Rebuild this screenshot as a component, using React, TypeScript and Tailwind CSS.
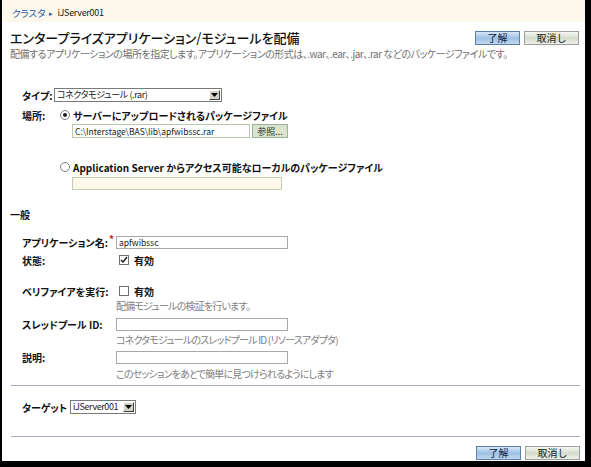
import React from 'react';

const palt = '[font-feature-settings:"palt"]';
const label = 'whitespace-nowrap text-[10px] font-bold leading-[11px] text-[#111] [font-feature-settings:"palt"]';

const OkButton = () => (
  <button className="h-[14px] w-[45px] border border-[#5b7fa6] bg-gradient-to-b from-[#d8e8f8] via-[#9ec0e4] to-[#c0d8f0] text-[10px] leading-none text-[#102040]">
    了解
  </button>
);

const CancelButton = () => (
  <button className="h-[14px] w-[55px] border border-[#9aa09a] bg-gradient-to-b from-[#f8f8f4] via-[#d4dccc] to-[#eeeeea] text-[10px] leading-none text-[#202020]">
    取消し
  </button>
);

const Select = ({ value, width }: { value: string; width: string }) => (
  <div className={`flex h-[14px] ${width} border border-[#7a7a7a] bg-white`}>
    <div className="flex-1 overflow-hidden whitespace-nowrap pl-[2px] text-[9px] leading-[12px] tracking-[-0.4px] text-[#202020] [font-feature-settings:'palt']">
      {value}
    </div>
    <div className="m-[1px] flex w-[11px] items-center justify-center border border-t-white border-l-white border-r-[#404040] border-b-[#404040] bg-[#d4d0c8]">
      <svg width="7" height="4" viewBox="0 0 7 4">
        <path d="M0 0h7L3.5 4z" fill="#000" />
      </svg>
    </div>
  </div>
);

const Radio = ({ checked }: { checked?: boolean }) => (
  <div className="flex h-[10px] w-[10px] items-center justify-center rounded-full border border-[#808080] bg-white">
    {checked && <div className="h-[4px] w-[4px] rounded-full bg-[#202020]" />}
  </div>
);

const Checkbox = ({ checked }: { checked?: boolean }) => (
  <div className="flex h-[10px] w-[10px] items-center justify-center border border-[#707070] bg-white">
    {checked && (
      <svg width="8" height="8" viewBox="0 0 8 8">
        <path d="M1 4l2 2 4-5" stroke="#202020" strokeWidth="1.5" fill="none" />
      </svg>
    )}
  </div>
);

const Help = ({ children }: { children: React.ReactNode }) => (
  <div className="flex h-[12px] items-center whitespace-nowrap pl-[114px] text-[10px] leading-[11px] tracking-[-0.8px] text-[#808080] [font-feature-settings:'palt']">
    {children}
  </div>
);

export default function App() {
  return (
    <div className="flex h-[467px] w-[591px] bg-black pb-[6px] pl-[2px] pr-[6px] [font-family:'Noto_Sans_CJK_JP',sans-serif]">
      <div className="flex flex-1 flex-col bg-white">
        {/* breadcrumb */}
        <div className="flex h-[22px] items-end gap-[4px] bg-[#fcf8ec] pb-[3px] pl-[10px] text-[9.5px] leading-[12px]">
          <span className={`text-[#2a5caa] ${palt}`}>クラスタ</span>
          <span className="text-[7px] text-[#2a5caa]">▸</span>
          <span className="text-[9px] tracking-[-0.3px] text-[#202020]">iJServer001</span>
        </div>

        {/* title */}
        <div className="mt-[8px] flex h-[16px] items-center justify-between pl-[8px] pr-[6px]">
          <h1 className={`text-[13px] font-medium leading-[14px] text-[#111] ${palt}`}>
            エンタープライズアプリケーション/モジュールを配備
          </h1>
          <div className="flex gap-[4px]">
            <OkButton />
            <CancelButton />
          </div>
        </div>
        <div className="mt-[1px] flex h-[12px] items-center whitespace-nowrap pl-[8px] text-[10px] leading-[11px] tracking-[-0.5px] text-[#707070] [font-feature-settings:'palt']">
          配備するアプリケーションの場所を指定します。アプリケーションの形式は、.war、.ear、.jar、.rar などのパッケージファイルです。
        </div>

        {/* type */}
        <div className="mt-[29px] flex h-[14px] items-center pl-[20px]">
          <div className={`w-[32px] ${label}`}>タイプ:</div>
          <Select value="コネクタモジュール (.rar)" width="w-[168px]" />
        </div>

        {/* location */}
        <div className="mt-[7px] flex h-[12px] items-center pl-[20px]">
          <div className={`w-[38px] ${label}`}>場所:</div>
          <Radio checked />
          <div className={`ml-[3px] ${label}`}>サーバーにアップロードされるパッケージファイル</div>
        </div>
        <div className="mt-[3px] flex h-[14px] gap-[2px] pl-[70px]">
          <div className="w-[178px] whitespace-nowrap border border-[#b8c8b0] bg-white pl-[2px] text-[8.5px] leading-[12px] text-[#202020]">
            C:\Interstage\BAS\lib\apfwibssc.rar
          </div>
          <button className="h-[14px] w-[36px] border border-[#a0b098] bg-[#d8e4d0] text-[9px] leading-none text-[#303030]">
            参照...
          </button>
        </div>

        <div className="mt-[23px] flex h-[12px] items-center pl-[58px]">
          <Radio />
          <div className={`ml-[3px] ${label}`}>Application Server からアクセス可能なローカルのパッケージファイル</div>
        </div>
        <div className="mt-[4px] h-[13px] pl-[70px]">
          <div className="h-[13px] w-[210px] border border-[#c0d0b0] bg-[#fdf9ea]" />
        </div>

        {/* general */}
        <div className={`mt-[19px] h-[12px] pl-[8px] ${label}`}>一般</div>

        <div className="mt-[15px] flex h-[13px] items-center pl-[20px]">
          <div className={`w-[94px] ${label}`}>
            アプリケーション名:<span className="relative -top-[4px] ml-[1px] text-[#d02020]">*</span>
          </div>
          <div className="h-[13px] w-[172px] border border-[#a8a8a8] bg-white pl-[2px] text-[8.5px] leading-[11px] text-[#202020]">
            apfwibssc
          </div>
        </div>
        <div className="mt-[5px] flex h-[12px] items-center pl-[20px]">
          <div className={`w-[97px] ${label}`}>状態:</div>
          <Checkbox checked />
          <div className={`ml-[5px] ${label}`}>有効</div>
        </div>

        <div className="mt-[19px] flex h-[12px] items-center pl-[20px]">
          <div className={`w-[97px] ${label}`}>ベリファイアを実行:</div>
          <Checkbox />
          <div className={`ml-[5px] ${label}`}>有効</div>
        </div>
        <div className="mt-[2px]">
          <Help>配備モジュールの検証を行います。</Help>
        </div>

        <div className="mt-[7px] flex h-[13px] items-center pl-[20px]">
          <div className={`w-[94px] ${label}`}>スレッドプール ID:</div>
          <div className="h-[13px] w-[172px] border border-[#a8a8a8] bg-white" />
        </div>
        <div className="mt-[2px]">
          <Help>コネクタモジュールのスレッドプール ID (リソースアダプタ)</Help>
        </div>

        <div className="mt-[6px] flex h-[13px] items-center pl-[20px]">
          <div className={`w-[94px] ${label}`}>説明:</div>
          <div className="h-[13px] w-[172px] border border-[#a8a8a8] bg-white" />
        </div>
        <div className="mt-[3px]">
          <Help>このセッションをあとで簡単に見つけられるようにします</Help>
        </div>

        <div className="ml-[9px] mr-[5px] mt-[6px] h-px bg-[#a8a8bc]" />

        {/* target */}
        <div className="mt-[14px] flex h-[14px] items-center pl-[20px]">
          <div className={`w-[48px] ${label}`}>ターゲット</div>
          <Select value="iJServer001" width="w-[66px]" />
        </div>

        <div className="ml-[9px] mr-[5px] mt-[22px] h-px bg-[#a8a8bc]" />

        <div className="mt-[9px] flex justify-end gap-[4px] pr-[5px]">
          <OkButton />
          <CancelButton />
        </div>
      </div>
    </div>
  );
}
